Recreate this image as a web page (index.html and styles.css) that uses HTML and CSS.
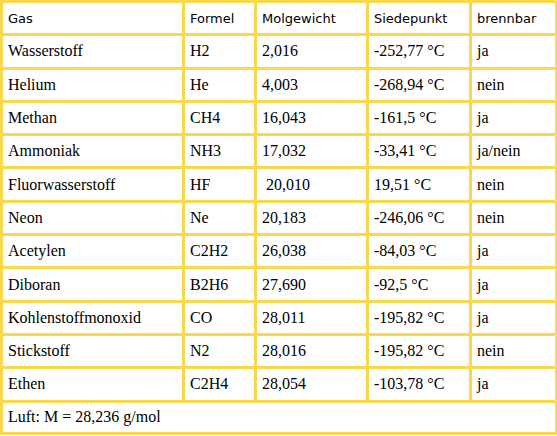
FILE: index.html
```html
<!DOCTYPE html>
<html lang="de">
<head>
    <meta charset="UTF-8">
    <title>Gase</title>
    <link rel="stylesheet" href="styles.css">
</head>
<body>
    <table class="gas-table">
        <colgroup>
            <col class="col-gas">
            <col class="col-formel">
            <col class="col-mol">
            <col class="col-siede">
            <col class="col-brenn">
        </colgroup>
        <thead>
            <tr>
                <th>Gas</th>
                <th>Formel</th>
                <th>Molgewicht</th>
                <th>Siedepunkt</th>
                <th>brennbar</th>
            </tr>
        </thead>
        <tbody>
            <tr><td>Wasserstoff</td><td>H2</td><td>2,016</td><td>-252,77 °C</td><td>ja</td></tr>
            <tr><td>Helium</td><td>He</td><td>4,003</td><td>-268,94 °C</td><td>nein</td></tr>
            <tr><td>Methan</td><td>CH4</td><td>16,043</td><td>-161,5 °C</td><td>ja</td></tr>
            <tr><td>Ammoniak</td><td>NH3</td><td>17,032</td><td>-33,41 °C</td><td>ja/nein</td></tr>
            <tr><td>Fluorwasserstoff</td><td>HF</td><td>&nbsp;20,010</td><td>19,51 °C</td><td>nein</td></tr>
            <tr><td>Neon</td><td>Ne</td><td>20,183</td><td>-246,06 °C</td><td>nein</td></tr>
            <tr><td>Acetylen</td><td>C2H2</td><td>26,038</td><td>-84,03 °C</td><td>ja</td></tr>
            <tr><td>Diboran</td><td>B2H6</td><td>27,690</td><td>-92,5 °C</td><td>ja</td></tr>
            <tr><td>Kohlenstoffmonoxid</td><td>CO</td><td>28,011</td><td>-195,82 °C</td><td>ja</td></tr>
            <tr><td>Stickstoff</td><td>N2</td><td>28,016</td><td>-195,82 °C</td><td>nein</td></tr>
            <tr><td>Ethen</td><td>C2H4</td><td>28,054</td><td>-103,78 °C</td><td>ja</td></tr>
        </tbody>
        <tfoot>
            <tr><td colspan="5">Luft: M = 28,236 g/mol</td></tr>
        </tfoot>
    </table>
</body>
</html>
```

FILE: styles.css
```css
body {
    margin: 0;
    padding: 0;
    background: #ffffff;
    color: #000000;
    font-family: 'Liberation Serif', 'Times New Roman', serif;
}

.gas-table {
    border-collapse: collapse;
    table-layout: fixed;
    width: 555px;
    border: 3px solid #fad84e;
}

.col-gas { width: 182px; }
.col-formel { width: 72px; }
.col-mol { width: 112px; }
.col-siede { width: 103px; }
.col-brenn { width: 86px; }

.gas-table th,
.gas-table td {
    border: 3px solid #fad84e;
    height: 30.3px;
    padding: 0 5px;
    text-align: left;
    vertical-align: middle;
    white-space: nowrap;
}

.gas-table th {
    font-family: 'DejaVu Sans', 'Liberation Sans', sans-serif;
    font-size: 13px;
    font-weight: normal;
}

.gas-table td {
    font-size: 16px;
}

.gas-table tfoot td {
    height: 29px;
}
```
